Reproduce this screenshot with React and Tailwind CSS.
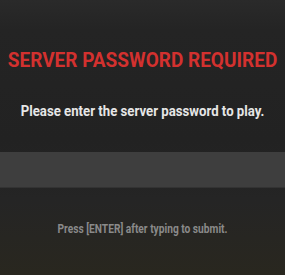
export default function App() {
  return (
    <div
      className="w-[285px] h-[275px] overflow-hidden flex flex-col bg-[linear-gradient(180deg,#2a2a2a_0px,#242424_30px,#222222_140px,#252525_200px,#29271f_275px)]"
      style={{ fontFamily: 'Roboto, "Liberation Sans", sans-serif' }}
    >
      <h1 className="mt-[50px] h-[20px] flex justify-center items-center whitespace-nowrap text-[20px] font-bold leading-none text-[#d3312f] scale-x-[0.95]">
        SERVER PASSWORD REQUIRED
      </h1>
      <p className="mt-[34px] h-[16px] flex justify-center items-center whitespace-nowrap text-[14.5px] font-bold leading-none text-[#e6e6e6] scale-x-[0.91]">
        Please enter the server password to play.
      </p>
      <input
        type="password"
        className="mt-[32px] h-[36px] w-full bg-[#3e3e3e] border-b border-[#333] outline-none px-3 text-white"
      />
      <p className="mt-[35px] h-[12px] flex justify-center items-center whitespace-nowrap text-[12px] font-bold leading-none text-[#8a8a8a] scale-x-[0.85]">
        Press [ENTER] after typing to submit.
      </p>
    </div>
  );
}
